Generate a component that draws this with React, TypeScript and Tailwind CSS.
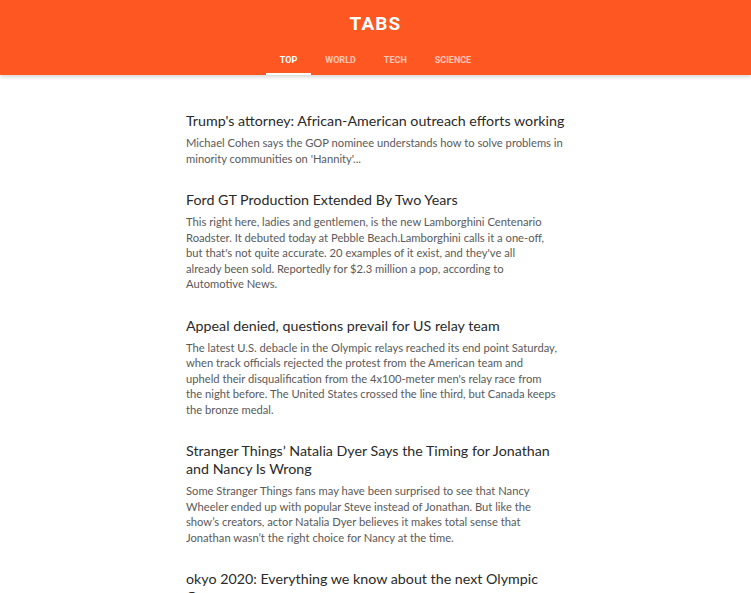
import cn from 'clsx'

interface Story {
  title: string
  lines: string[]
}

const tabs = ['Top', 'World', 'Tech', 'Science']

const stories: Story[] = [
  {
    title: "Trump's attorney: African-American outreach efforts working",
    lines: [
      'Michael Cohen says the GOP nominee understands how to solve problems in',
      "minority communities on 'Hannity'...",
    ],
  },
  {
    title: 'Ford GT Production Extended By Two Years',
    lines: [
      'This right here, ladies and gentlemen, is the new Lamborghini Centenario',
      'Roadster. It debuted today at Pebble Beach.Lamborghini calls it a one-off,',
      "but that's not quite accurate. 20 examples of it exist, and they've all",
      'already been sold. Reportedly for $2.3 million a pop, according to',
      'Automotive News.',
    ],
  },
  {
    title: 'Appeal denied, questions prevail for US relay team',
    lines: [
      'The latest U.S. debacle in the Olympic relays reached its end point Saturday,',
      'when track officials rejected the protest from the American team and',
      "upheld their disqualification from the 4x100-meter men's relay race from",
      'the night before. The United States crossed the line third, but Canada keeps',
      'the bronze medal.',
    ],
  },
  {
    title: 'Stranger Things’ Natalia Dyer Says the Timing for Jonathan and Nancy Is Wrong',
    lines: [
      'Some Stranger Things fans may have been surprised to see that Nancy',
      'Wheeler ended up with popular Steve instead of Jonathan. But like the',
      'show’s creators, actor Natalia Dyer believes it makes total sense that',
      'Jonathan wasn’t the right choice for Nancy at the time.',
    ],
  },
  {
    title: 'okyo 2020: Everything we know about the next Olympic Games',
    lines: ['The 2020 Summer Olympics will be held in Tokyo, Japan.'],
  },
]

export default function App() {
  const active = 'Top'

  return (
    <div className="h-[593px] overflow-hidden bg-white font-['Lato','Noto_Sans',sans-serif]">
      <header className="relative z-10 flex h-[75px] flex-col items-center bg-[#ff5722] shadow-[0_2px_4px_rgba(0,0,0,0.16)]">
        <h1 className="pt-[13px] font-['Roboto',sans-serif] text-[19px] leading-[22px] font-bold tracking-[0.06em] text-white">
          TABS
        </h1>
        <nav className="mt-auto flex">
          {tabs.map((tab) => (
            <div
              key={tab}
              className={cn(
                'flex h-[29px] items-center border-b-2 px-[14px] pt-[2px] font-[Roboto,sans-serif] text-[9px] font-bold uppercase',
                tab === active ? 'border-white text-white' : 'border-transparent text-white/65'
              )}
            >
              {tab}
            </div>
          ))}
        </nav>
      </header>
      <main className="mx-auto flex w-[379px] flex-col gap-[25px] pt-[37px]">
        {stories.map((story) => (
          <article key={story.title}>
            <h2 className="text-[14.25px] leading-[18px] text-[#2a2a2a]">{story.title}</h2>
            <p className="mt-[5px] text-[11.2px] leading-[15.5px] whitespace-nowrap text-[#5a5a5a]">
              {story.lines.map((line, i) => (
                <span key={i} className="block">
                  {line}
                </span>
              ))}
            </p>
          </article>
        ))}
      </main>
    </div>
  )
}
